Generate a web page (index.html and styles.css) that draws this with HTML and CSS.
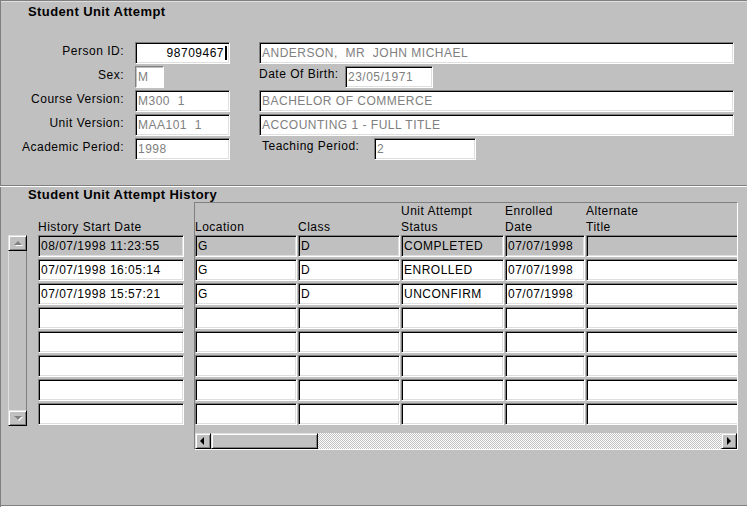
FILE: index.html
```html
<!DOCTYPE html>
<html lang="en">
<head>
  <meta charset="UTF-8">
  <title>Student Unit Attempt</title>
  <link rel="stylesheet" href="styles.css">
</head>
<body>
  <div class="window">
    <div class="attempt">
      <h2>Student Unit Attempt</h2>
      <div class="form">
        <label>Person ID:</label>
        <div class="field mid edit"><span class="caret">98709467</span></div>
        <div class="field right">ANDERSON,  MR  JOHN MICHAEL</div>

        <label>Sex:</label>
        <div class="field mid flat sex">M</div>
        <div class="pair right">
          <span class="pair-label dob">Date Of Birth:</span>
          <div class="field dob-field">23/05/1971</div>
        </div>

        <label>Course Version:</label>
        <div class="field mid">M300  1</div>
        <div class="field right">BACHELOR OF COMMERCE</div>

        <label>Unit Version:</label>
        <div class="field mid">MAA101  1</div>
        <div class="field right">ACCOUNTING 1 - FULL TITLE</div>

        <label>Academic Period:</label>
        <div class="field mid">1998</div>
        <div class="pair right">
          <span class="pair-label teach">Teaching Period:</span>
          <div class="field teach-field">2</div>
        </div>
      </div>
    </div>

    <div class="history">
      <h2>Student Unit Attempt History</h2>
      <div class="history-body">
        <div class="vscroll">
          <div class="btn up"></div>
          <div class="track"></div>
          <div class="btn down"></div>
        </div>

        <div class="dates">
          <div class="head">History Start Date</div>
          <div class="field cell cur">08/07/1998 11:23:55</div>
          <div class="field cell">07/07/1998 16:05:14</div>
          <div class="field cell">07/07/1998 15:57:21</div>
          <div class="field cell"></div>
          <div class="field cell"></div>
          <div class="field cell"></div>
          <div class="field cell"></div>
          <div class="field cell"></div>
        </div>

        <div class="frame">
          <div class="cols">
            <div class="head">Location</div>
            <div class="head">Class</div>
            <div class="head">Unit Attempt<br>Status</div>
            <div class="head">Enrolled<br>Date</div>
            <div class="head">Alternate<br>Title</div>

            <div class="field cell cur">G</div>
            <div class="field cell cur">D</div>
            <div class="field cell cur">COMPLETED</div>
            <div class="field cell cur">07/07/1998</div>
            <div class="field cell cur"></div>

            <div class="field cell">G</div>
            <div class="field cell">D</div>
            <div class="field cell">ENROLLED</div>
            <div class="field cell">07/07/1998</div>
            <div class="field cell"></div>

            <div class="field cell">G</div>
            <div class="field cell">D</div>
            <div class="field cell">UNCONFIRM</div>
            <div class="field cell">07/07/1998</div>
            <div class="field cell"></div>

            <div class="field cell"></div><div class="field cell"></div><div class="field cell"></div><div class="field cell"></div><div class="field cell"></div>
            <div class="field cell"></div><div class="field cell"></div><div class="field cell"></div><div class="field cell"></div><div class="field cell"></div>
            <div class="field cell"></div><div class="field cell"></div><div class="field cell"></div><div class="field cell"></div><div class="field cell"></div>
            <div class="field cell"></div><div class="field cell"></div><div class="field cell"></div><div class="field cell"></div><div class="field cell"></div>
            <div class="field cell"></div><div class="field cell"></div><div class="field cell"></div><div class="field cell"></div><div class="field cell"></div>
          </div>
          <div class="hscroll">
            <div class="btn left"></div>
            <div class="thumb"></div>
            <div class="track"></div>
            <div class="btn right-btn"></div>
          </div>
        </div>
      </div>
    </div>
  </div>
</body>
</html>
```

FILE: styles.css
```css
body{
  margin: 0;
  font-family: "Liberation Sans", Arial, sans-serif;
  font-size: 12px;
  letter-spacing: .5px;
  color: #000;
}
.window{
  width: 747px;
  height: 507px;
  background-color: #c0c0c0;
  overflow: hidden;
  box-shadow: inset 1px 0 #808080, inset 0 1px #808080, inset 0 2px #dfdfdf, inset 0 -1px #fff, inset 0 -2px #808080;
}
h2{
  margin: 0 0 0 28px;
  font-size: 13px;
  line-height: 15px;
  letter-spacing: .4px;
  font-weight: bold;
}

/* top form */
.attempt{
  height: 186px;
  box-sizing: border-box;
  padding-top: 4px;
  border-bottom: 1px solid #808080;
}
.form{
  margin-top: 23px;
  display: grid;
  grid-template-columns: 124px 11px 95px 29px 475px;
  grid-auto-rows: 22px;
  row-gap: 2px;
}
.form label{
  grid-column: 1;
  text-align: right;
  padding-top: 1px;
  line-height: 16px;
}
.form .mid{
  grid-column: 3;
}
.form .right{
  grid-column: 5;
}
.form .sex{
  width: 29px;
}
.pair{
  display: flex;
}
.pair-label{
  box-sizing: border-box;
  line-height: 16px;
}
.pair-label.dob{
  width: 86px;
}
.pair-label.teach{
  width: 115px;
  padding-left: 3px;
}
.dob-field{
  width: 88px;
}
.teach-field{
  width: 102px;
}

/* sunken text box */
.field{
  box-sizing: border-box;
  height: 22px;
  padding: 1px 2px;
  line-height: 18px;
  background-color: #fff;
  color: #808080;
  border: 1px solid;
  border-color: #808080 #fff #fff #808080;
  box-shadow: inset 1px 1px #000, inset -1px -1px #dfdfdf;
  white-space: pre;
  overflow: hidden;
}
.field.flat{
  box-shadow: inset 1px 1px #c0c0c0;
}
.field.edit{
  color: #000;
  text-align: right;
  padding-right: 2px;
}
.caret{
  border-right: 2px solid #000;
  padding-right: 1px;
}
.field.cell{
  color: #000;
}
.field.cur{
  background-color: #c0c0c0;
}

/* history block */
.history{
  border-top: 1px solid #fff;
}
.history-body{
  display: flex;
  align-items: flex-start;
  padding-left: 8px;
}
.head{
  line-height: 16px;
  align-self: end;
  white-space: nowrap;
}
.dates{
  margin-left: 11px;
  width: 146px;
  display: grid;
  grid-template-rows: 33px repeat(8, 24px);
}
.frame{
  margin-left: 10px;
  width: 544px;
  height: 248px;
  box-sizing: border-box;
  border: 1px solid;
  border-color: #808080 #fff #fff #808080;
  overflow: hidden;
}
.cols{
  display: grid;
  grid-template-columns: 102px 102px 103px 80px 160px;
  grid-template-rows: 32px repeat(8, 24px);
  column-gap: 1px;
}
.dates .field,
.cols .field{
  align-self: start;
}

/* scrollbars */
.btn,
.thumb{
  box-sizing: border-box;
  background-color: #c0c0c0;
  border: 1px solid;
  border-color: #dfdfdf #000 #000 #dfdfdf;
  box-shadow: inset 1px 1px #fff, inset -1px -1px #808080;
  display: flex;
  align-items: center;
  justify-content: center;
}
.btn::before{
  content: '';
  display: block;
  width: 0;
  height: 0;
}
.vscroll{
  margin-top: 33px;
  width: 19px;
  height: 191px;
  display: flex;
  flex-direction: column;
}
.vscroll .btn{
  height: 16px;
}
.vscroll .track{
  flex: 1;
  border-left: 1px solid #dfdfdf;
  border-right: 1px solid #808080;
}
.vscroll .btn::before{
  border-left: 4px solid transparent;
  border-right: 4px solid transparent;
  filter: drop-shadow(1px 1px 0 #fff);
}
.vscroll .up::before{
  border-bottom: 4px solid #808080;
}
.vscroll .down::before{
  border-top: 4px solid #808080;
}
.hscroll{
  margin-top: 6px;
  height: 16px;
  display: flex;
}
.hscroll .btn{
  width: 16px;
}
.hscroll .thumb{
  width: 107px;
}
.hscroll .track{
  flex: 1;
  background-color: #fff;
  background-image: conic-gradient(#c0c0c0 25%, #fff 0 50%, #c0c0c0 0 75%, #fff 0);
  background-size: 2px 2px;
}
.hscroll .btn::before{
  border-top: 4px solid transparent;
  border-bottom: 4px solid transparent;
}
.hscroll .left::before{
  border-right: 4px solid #000;
  margin-left: -2px;
}
.hscroll .right-btn::before{
  border-left: 4px solid #000;
}
```
